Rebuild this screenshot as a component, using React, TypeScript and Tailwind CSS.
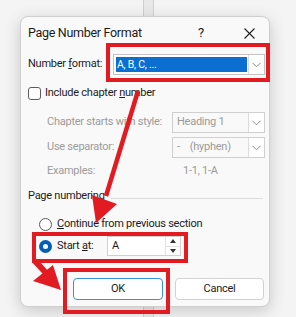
import React from "react";

const Chevron = () => (
  <svg width="9" height="6" viewBox="0 0 9 6" className="block">
    <path d="M0.5 0.8 L4.5 4.8 L8.5 0.8" fill="none" stroke="#8a8a8a" strokeWidth="1" />
  </svg>
);

export default function App() {
  return (
    <div
      className="relative w-[296px] h-[317px] overflow-hidden bg-[#f4f4f4] text-[#1b1b1b] whitespace-nowrap tracking-[-0.25px]"
      style={{ fontFamily: 'Roboto, "Noto Sans", sans-serif' }}
    >
      {/* background column behind dialog */}
      <div className="absolute left-[143px] top-0 w-[11px] h-[317px] bg-[#e9e9e9] border-x border-[#cfcfcf]" />

      <div className="pt-[16px] pl-[20px] relative">
        <div className="w-[250px] h-[291px] rounded-[8px] border border-[#cfcfcf] bg-[#f9f9f9] shadow-[0_4px_16px_rgba(0,0,0,0.18)] flex flex-col">
          {/* title */}
          <div className="h-[32px] flex items-center pl-[7px] pr-[14px]">
            <span className="text-[12.5px] tracking-[-0.3px]">Page Number Format</span>
            <span className="ml-auto text-[13px] mr-[40px]">?</span>
            <svg width="11" height="11" viewBox="0 0 11 11">
              <path d="M0.5 0.5 L10.5 10.5 M10.5 0.5 L0.5 10.5" stroke="#222" strokeWidth="1.1" />
            </svg>
          </div>

          {/* number format */}
          <div className="mt-[5px] h-[21px] flex items-center pl-[7px]">
            <span className="text-[11px] w-[85px]">Number <u>f</u>ormat:</span>
            <div className="w-[152px] h-[21px] bg-white border border-[#c4c4c4] flex items-center pl-[2px]">
              <div className="w-[131px] h-[15px] bg-[#0a6fd0] text-white text-[10.5px] leading-[15px] pl-[1px]">A, B, C, ...</div>
              <div className="ml-auto w-[16px] h-[19px] border-l border-[#dcdcdc] flex items-center justify-center">
                <Chevron />
              </div>
            </div>
          </div>

          {/* include chapter number */}
          <div className="mt-[10px] h-[16px] flex items-center pl-[7px]">
            <div className="w-[13px] h-[13px] rounded-[3px] border border-[#5c5c5c] bg-white" />
            <span className="ml-[4px] text-[11px]">Include chapter <u>n</u>umber</span>
          </div>

          {/* chapter starts */}
          <div className="mt-[11px] h-[21px] flex items-center pl-[26px] text-[#9b9b9b]">
            <span className="text-[11px] w-[125px]">Chapter starts with style:</span>
            <div className="w-[93px] h-[21px] bg-[#f9f9f9] border border-[#cfcfcf] flex items-center pl-[4px]">
              <span className="text-[11px]">Heading 1</span>
              <div className="ml-auto w-[16px] h-[19px] border-l border-[#dcdcdc] bg-white flex items-center justify-center">
                <Chevron />
              </div>
            </div>
          </div>

          {/* separator */}
          <div className="mt-[4px] h-[21px] flex items-center pl-[26px] text-[#9b9b9b]">
            <span className="text-[11px] w-[125px]">Use separator:</span>
            <div className="w-[93px] h-[21px] bg-[#f9f9f9] border border-[#cfcfcf] flex items-center pl-[4px]">
              <span className="text-[11px] whitespace-pre">-    (hyphen)</span>
              <div className="ml-auto w-[16px] h-[19px] border-l border-[#dcdcdc] bg-white flex items-center justify-center">
                <Chevron />
              </div>
            </div>
          </div>

          {/* examples */}
          <div className="mt-[5px] h-[16px] flex items-center pl-[26px] text-[#9b9b9b]">
            <span className="text-[11px] w-[136px]">Examples:</span>
            <span className="text-[11px]">1-1, 1-A</span>
          </div>

          {/* page numbering */}
          <div className="mt-[9px] h-[16px] flex items-center pl-[7px] pr-[6px]">
            <span className="text-[11px]">Page numberin<u>g</u></span>
            <div className="ml-[6px] flex-1 h-px bg-[#dedede] mt-[4px]" />
          </div>

          {/* continue */}
          <div className="mt-[12px] h-[16px] flex items-center pl-[18px]">
            <div className="w-[13px] h-[13px] rounded-full border border-[#5c5c5c] bg-white" />
            <span className="ml-[5px] text-[11px]"><u>C</u>ontinue from previous section</span>
          </div>

          {/* start at */}
          <div className="mt-[4px] h-[20px] flex items-center pl-[18px]">
            <div className="w-[13px] h-[13px] rounded-full bg-[#005fb8] flex items-center justify-center">
              <div className="w-[5px] h-[5px] rounded-full bg-white" />
            </div>
            <span className="ml-[5px] text-[11px] w-[50px]">Start <u>a</u>t:</span>
            <div className="w-[74px] h-[20px] bg-white border border-[#d0d0d0] flex items-center pl-[4px]">
              <span className="text-[11px]">A</span>
              <div className="ml-auto w-[15px] h-[18px] flex flex-col border-l border-[#e2e2e2]">
                <div className="flex-1 flex items-center justify-center border-b border-[#e2e2e2]">
                  <svg width="6" height="4" viewBox="0 0 6 4"><path d="M0 4 L3 0 L6 4Z" fill="#333" /></svg>
                </div>
                <div className="flex-1 flex items-center justify-center">
                  <svg width="6" height="4" viewBox="0 0 6 4"><path d="M0 0 L3 4 L6 0Z" fill="#333" /></svg>
                </div>
              </div>
            </div>
          </div>

          {/* buttons */}
          <div className="mt-[22px] h-[22px] flex pl-[52px] gap-[12px]">
            <div className="w-[90px] h-[22px] rounded-[4px] bg-white border border-[#3c8fe0] flex items-center justify-center text-[11px]">OK</div>
            <div className="w-[89px] h-[22px] rounded-[4px] bg-white border border-[#d2d2d2] flex items-center justify-center text-[11px]">Cancel</div>
          </div>
        </div>
      </div>

      {/* annotation boxes */}
      <div className="absolute left-[106px] top-[43px] w-[164px] h-[39px] border-[4px] border-[#e21b22]" />
      <div className="absolute left-[32px] top-[232px] w-[156px] h-[31px] border-[4px] border-[#e21b22]" />
      <div className="absolute left-[63px] top-[268px] w-[107px] h-[46px] border-[4px] border-[#e21b22]" />

      {/* arrows */}
      <svg className="absolute left-0 top-0" width="296" height="317" viewBox="0 0 296 317">
        <line x1="138" y1="91" x2="106" y2="196" stroke="#e21b22" strokeWidth="4.5" />
        <polygon points="92,195 117,204 96,223" fill="#e21b22" />
        <line x1="35" y1="261" x2="46" y2="273" stroke="#e21b22" strokeWidth="6" />
        <polygon points="33,281 53,265 61,290" fill="#e21b22" />
      </svg>
    </div>
  );
}
